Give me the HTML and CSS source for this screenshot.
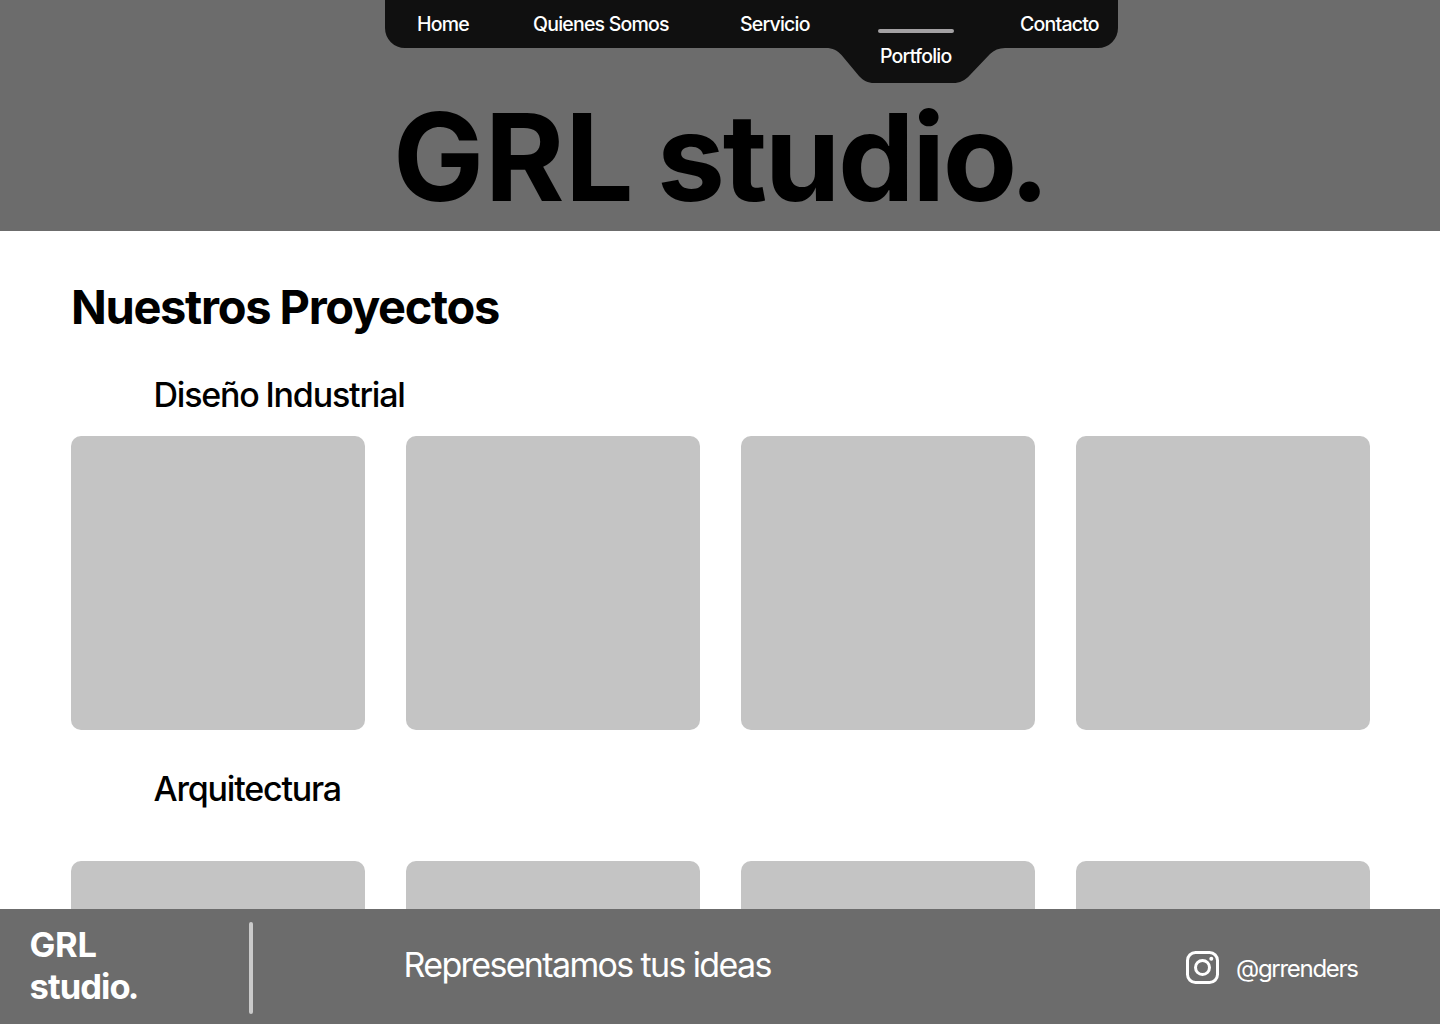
FILE: index.html
```html
<!DOCTYPE html>
<html lang="es">
<head>
<meta charset="utf-8">
<title>GRL studio.</title>
<link rel="stylesheet" href="styles.css">
</head>
<body>
<header class="hero">
  <nav class="nav">
    <svg class="nav-shape" width="733" height="83" viewBox="0 0 733 83" aria-hidden="true">
      <path fill="#101010" d="M0 0H733V28A20 20 0 0 1 713 48H620C614 48 609 50 605 54L585 75C580 80.500 575 83 568 83H489C483 83 478 80.500 474 76L456.500 55C452.500 50.500 447.500 48 441 48H20A20 20 0 0 1 0 28Z"/>
    </svg>
    <a class="nav-link">Home</a>
    <a class="nav-link">Quienes Somos</a>
    <a class="nav-link">Servicio</a>
    <a class="nav-link active"><span class="marker"></span><span class="label">Portfolio</span></a>
    <a class="nav-link">Contacto</a>
  </nav>
  <h1 class="title"><span class="caps">GRL</span> studi<span class="tight">o</span>.</h1>
</header>
<main class="projects">
  <h2 class="heading">Nuestros Proyectos</h2>
  <section>
    <h3 class="category">Diseño Industrial</h3>
    <div class="cards">
      <div class="card"></div><div class="card"></div><div class="card"></div><div class="card"></div>
    </div>
  </section>
  <section>
    <h3 class="category spaced">Arquitectura</h3>
    <div class="cards">
      <div class="card"></div><div class="card"></div><div class="card"></div><div class="card"></div>
    </div>
  </section>
</main>
<footer class="footer">
  <div class="brand"><span class="caps">GRL</span><br>studi<span class="tight">o</span>.</div>
  <div class="divider"></div>
  <p class="tagline">Representamos tus ideas</p>
  <a class="social">
    <svg width="33" height="33" viewBox="0 0 33 33" fill="none" aria-hidden="true">
      <rect x="1.500" y="1.500" width="30" height="30" rx="8" stroke="#fff" stroke-width="3"/>
      <circle cx="16.500" cy="16.500" r="7" stroke="#fff" stroke-width="3"/>
      <circle cx="25.300" cy="7.700" r="2" fill="#fff"/>
    </svg>
    <span class="handle">@grrenders</span>
  </a>
</footer>
</body>
</html>
```
FILE: styles.css
```css
* { box-sizing: border-box; }
body {
  margin: 0;
  height: 1024px;
  display: flex;
  flex-direction: column;
  overflow: hidden;
  background: #fff;
  color: #000;
  font-family: Inter, "Liberation Sans", sans-serif;
}
h1, h2, h3, p { margin: 0; }

.hero { flex: none; height: 231px; background: #6c6c6c; }
.nav {
  position: relative;
  display: grid;
  grid-template-columns: 116px 207px 137px 143px auto;
  width: 733px;
  height: 83px;
  margin-left: 385px;
  padding-left: 32px;
}
.nav-shape { position: absolute; left: 0; top: 0; }
.nav-link {
  position: relative;
  color: #fff;
  font-size: 19.500px;
  font-weight: 500;
  line-height: 48px;
  letter-spacing: -0.780px;
  white-space: nowrap;
}
.active { display: flex; flex-direction: column; padding-top: 29px; line-height: 24px; }
.marker { width: 76px; height: 4px; margin-left: 1px; border-radius: 2px; background: #a3a1a3; }
.label { margin: 11px 0 0 3px; }
.title {
  width: 660px;
  margin-left: 393px;
  font-size: 121.500px;
  font-weight: 700;
  line-height: 148px;
  letter-spacing: -2.400px;
  word-spacing: -3.500px;
  white-space: nowrap;
}
.title .caps { letter-spacing: 0.500px; }
.title .tight { letter-spacing: -8px; }

.projects { flex: 1; min-height: 0; overflow: hidden; padding: 47px 70px 0 71px; }
.heading { font-size: 47px; font-weight: 700; line-height: 58px; letter-spacing: -1.320px; word-spacing: -0.500px; }
.category {
  margin: 38px 0 20px;
  padding-left: 82.500px;
  font-size: 34px;
  font-weight: 500;
  line-height: 42px;
  letter-spacing: -1.200px;
  word-spacing: -1px;
}
.spaced { margin-bottom: 51px; }
.cards { display: grid; grid-template-columns: repeat(4, 294px); gap: 41px; }
.card { height: 294px; border-radius: 10px; background: #c4c4c4; }

.footer {
  flex: none;
  display: flex;
  align-items: center;
  height: 115px;
  padding-left: 29.500px;
  background: #6c6c6c;
  color: #fff;
}
.brand { width: 219.500px; margin-top: -2px; font-size: 34.500px; font-weight: 700; line-height: 42px; letter-spacing: -0.900px; }
.brand .caps { letter-spacing: -0.300px; }
.brand .tight { letter-spacing: -2.900px; }
.divider { width: 4px; height: 92px; margin-top: 2px; border-radius: 2px; background: #cacaca; }
.tagline { width: 782px; margin-top: -3px; padding-left: 150.500px; font-size: 34px; line-height: 42px; letter-spacing: -1.640px; }
.social { display: flex; align-items: center; gap: 17px; margin: 2px 0 0 151px; }
.handle { margin-top: 3px; font-size: 24px; line-height: 30px; letter-spacing: -1.280px; }
```
